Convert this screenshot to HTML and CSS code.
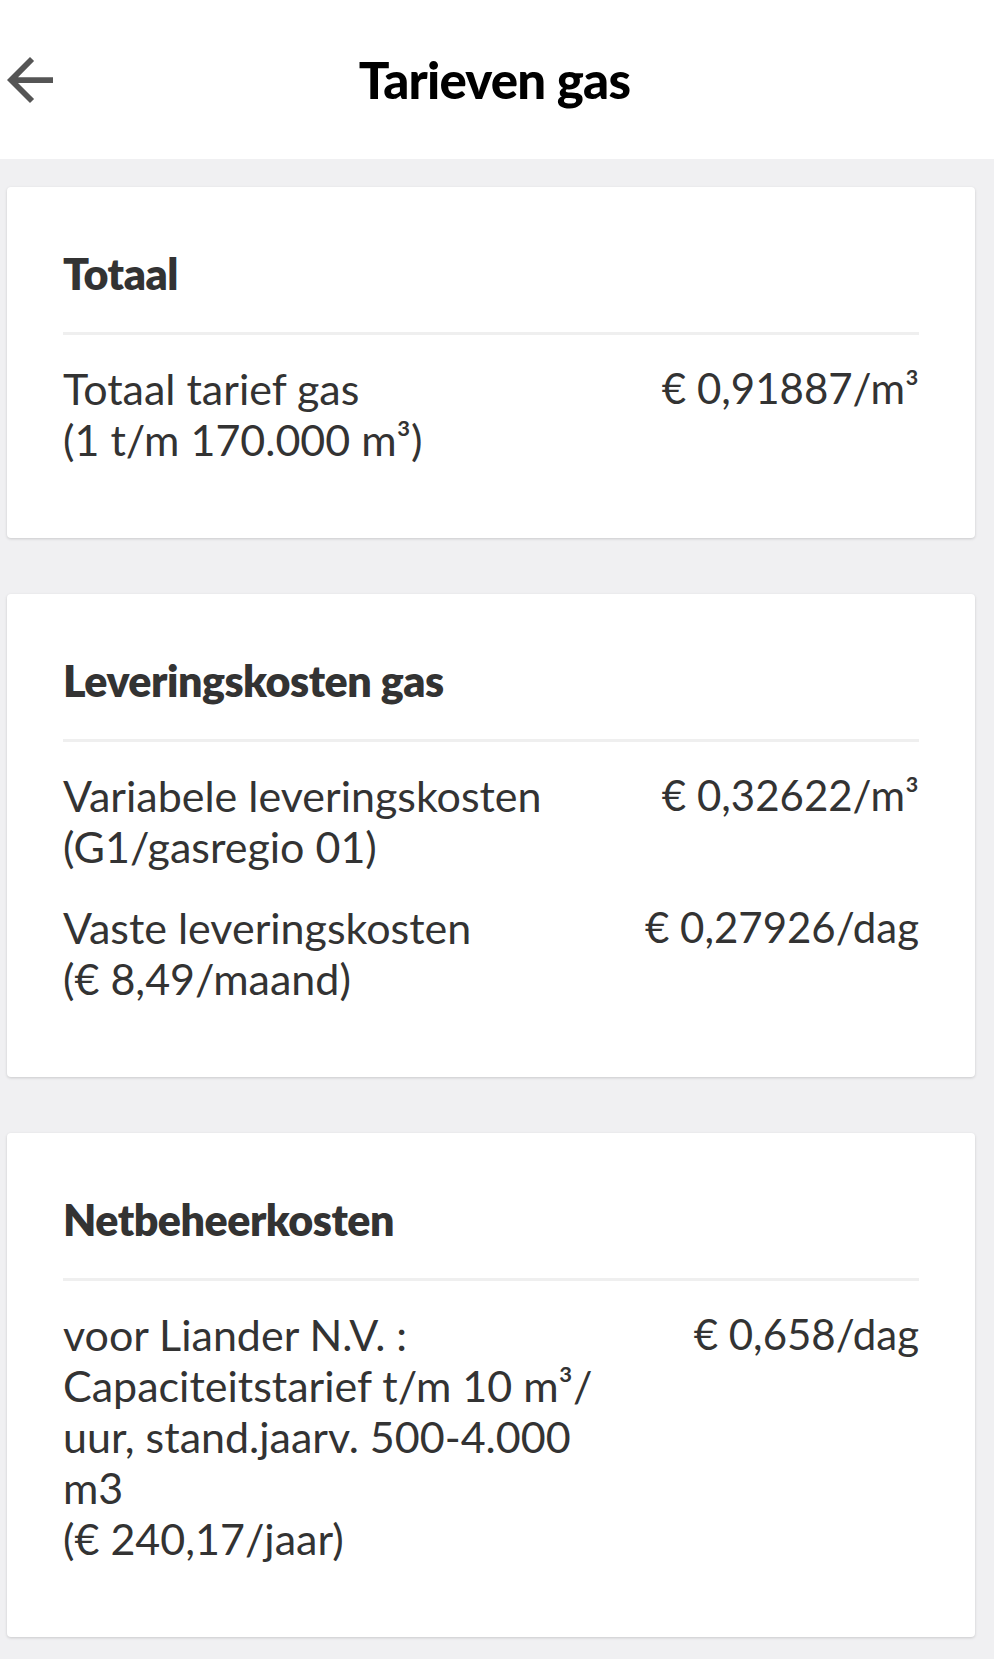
FILE: index.html
```html
<!DOCTYPE html>
<html lang="nl">
<head>
<meta charset="UTF-8">
<title>Tarieven gas</title>
<meta name="viewport" content="width=device-width, initial-scale=1.0">
<link rel="stylesheet" href="styles.css">
</head>
<body>

<div class="topbar">
  <a class="back" href="#">
    <svg viewBox="4 4 16 16" width="46" height="46"><path d="M20 11H7.83l5.59-5.59L12 4l-8 8 8 8 1.41-1.41L7.83 13H20v-2z"/></svg>
  </a>
  <h1 class="title">Tarieven gas</h1>
  <span></span>
</div>

<div class="content">
  <div class="card">
    <h2 class="card-title">Totaal</h2>
    <div class="divider"></div>
    <div class="row">
      <div class="label">Totaal tarief gas<br>(1 t/m 170.000 m³)</div>
      <div class="price">€ 0,91887/m³</div>
    </div>
  </div>

  <div class="card">
    <h2 class="card-title">Leveringskosten gas</h2>
    <div class="divider"></div>
    <div class="row">
      <div class="label">Variabele leveringskosten<br>(G1/gasregio 01)</div>
      <div class="price">€ 0,32622/m³</div>
    </div>
    <div class="row">
      <div class="label">Vaste leveringskosten<br>(€ 8,49/maand)</div>
      <div class="price">€ 0,27926/dag</div>
    </div>
  </div>

  <div class="card">
    <h2 class="card-title">Netbeheerkosten</h2>
    <div class="divider"></div>
    <div class="row">
      <div class="label">voor Liander N.V. : Capaciteitstarief t/m 10 m³/ uur, stand.jaarv. 500-4.000 m3<br>(€ 240,17/jaar)</div>
      <div class="price">€ 0,658/dag</div>
    </div>
  </div>
</div>

</body>
</html>
```

FILE: styles.css
```css
body {
  margin: 0;
  font-family: Lato, "Open Sans", sans-serif;
  background-color: #f0f0f2;
  color: #333;
}

/* header */
.topbar {
  display: grid;
  grid-template-columns: 1fr auto 1fr;
  align-items: center;
  height: 159px;
  padding: 0 12px 0 7px;
  background-color: #fff;
}
.back {
  display: flex;
  width: 46px;
  height: 46px;
}
.back svg {
  fill: #555;
}
.title {
  margin: 0;
  font-size: 51px;
  line-height: 64px;
  font-weight: 900;
  letter-spacing: -0.8px;
  color: #000;
}

/* cards */
.content {
  padding: 28px 19px 22px 7px;
}
.card {
  background-color: #fff;
  border-radius: 4px;
  box-shadow: 0 1px 3px rgba(0, 0, 0, 0.16);
  padding: 59px 56px 73px;
  margin-bottom: 56px;
}
.card:last-child {
  margin-bottom: 0;
}
.card-title {
  margin: 0 0 30px;
  font-size: 43px;
  line-height: 56px;
  font-weight: 800;
  letter-spacing: -0.5px;
}
.divider {
  height: 3px;
  background-color: #efefef;
  margin-bottom: 28px;
}
.row {
  display: flex;
  justify-content: space-between;
  font-size: 43px;
  line-height: 51px;
}
.row + .row {
  margin-top: 30px;
}
.label {
  width: 62%;
}
.price {
  font-size: 42px;
  white-space: nowrap;
  text-align: right;
}
```
